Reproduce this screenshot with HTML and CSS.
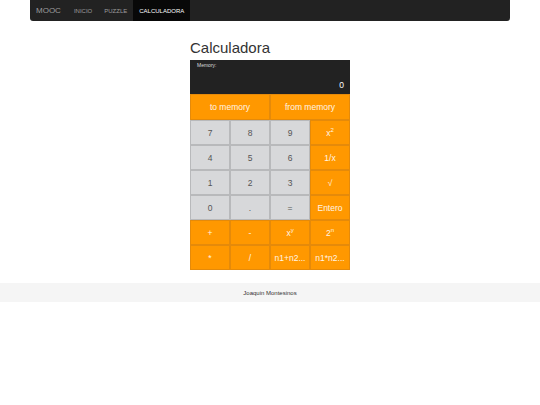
FILE: index.html
```html
<!DOCTYPE html>
<html>
<head>
<meta charset="utf-8">
<link rel="stylesheet" href="styles.css">
</head>
<body>
<nav class="navbar">
  <span class="brand">MOOC</span>
  <a class="nav-link">INICIO</a>
  <a class="nav-link">PUZZLE</a>
  <a class="nav-link active">CALCULADORA</a>
</nav>
<main class="content">
  <h2 class="title">Calculadora</h2>
  <div class="calc">
    <div class="display">
      <div class="memory">Memory:</div>
      <div class="value">0</div>
    </div>
    <div class="mem-row">
      <div class="btn op">to memory</div>
      <div class="btn op">from memory</div>
    </div>
    <div class="keys">
      <div class="btn num">7</div><div class="btn num">8</div><div class="btn num">9</div><div class="btn op"><span>x<sup>2</sup></span></div>
      <div class="btn num">4</div><div class="btn num">5</div><div class="btn num">6</div><div class="btn op">1/x</div>
      <div class="btn num">1</div><div class="btn num">2</div><div class="btn num">3</div><div class="btn op">√</div>
      <div class="btn num">0</div><div class="btn num">.</div><div class="btn num">=</div><div class="btn op">Entero</div>
      <div class="btn op">+</div><div class="btn op">-</div><div class="btn op"><span>x<sup>y</sup></span></div><div class="btn op"><span>2<sup>n</sup></span></div>
      <div class="btn op">*</div><div class="btn op">/</div><div class="btn op">n1+n2...</div><div class="btn op">n1*n2...</div>
    </div>
  </div>
</main>
<footer class="footer">Joaquin Montesinos</footer>
</body>
</html>
```
FILE: styles.css
```css
* { box-sizing: border-box; }
body {
  margin: 0;
  font-family: "Liberation Sans", Arial, sans-serif;
  background: #fff;
  color: #333;
}
.navbar {
  width: 480px;
  height: 21px;
  margin: 0 auto;
  background: #222;
  border-radius: 0 0 3px 3px;
  display: flex;
  align-items: stretch;
  padding-left: 6px;
}
.brand {
  color: #9d9d9d;
  font-size: 8px;
  display: flex;
  align-items: center;
  padding-right: 7px;
}
.nav-link {
  color: #9d9d9d;
  font-size: 6px;
  display: flex;
  align-items: center;
  padding: 0 6px;
}
.active {
  background: #080808;
  color: #fff;
  padding: 0 6px;
}
.content {
  width: 160px;
  margin: 0 auto;
}
.title {
  font-size: 15px;
  font-weight: normal;
  line-height: 18px;
  margin: 18px 0 3px;
  color: #333;
}
.calc {
  width: 160px;
}
.display {
  background: #222;
  height: 34px;
  position: relative;
  color: #fff;
}
.memory {
  font-size: 5px;
  color: #ddd;
  padding: 2px 0 0 7px;
}
.value {
  position: absolute;
  right: 6px;
  bottom: 4px;
  font-size: 8.5px;
}
.mem-row {
  display: grid;
  grid-template-columns: 1fr 1fr;
  height: 26px;
}
.keys {
  display: grid;
  grid-template-columns: repeat(4, 40px);
  grid-auto-rows: 25px;
}
.btn {
  display: flex;
  align-items: center;
  justify-content: center;
  font-size: 8.5px;
  border: 0.5px solid rgba(0, 0, 0, 0.12);
}
.num {
  background: #d7d8da;
  color: #555;
  border-color: #b8b9bb;
}
.op {
  background: #ff9800;
  color: #fff5e6;
  border-color: #e58a0a;
}
sup {
  font-size: 6px;
  vertical-align: super;
  line-height: 1;
}
.footer {
  margin-top: 13px;
  background: #f5f5f5;
  height: 19px;
  display: flex;
  align-items: center;
  justify-content: center;
  font-size: 6px;
  color: #333;
}
```
